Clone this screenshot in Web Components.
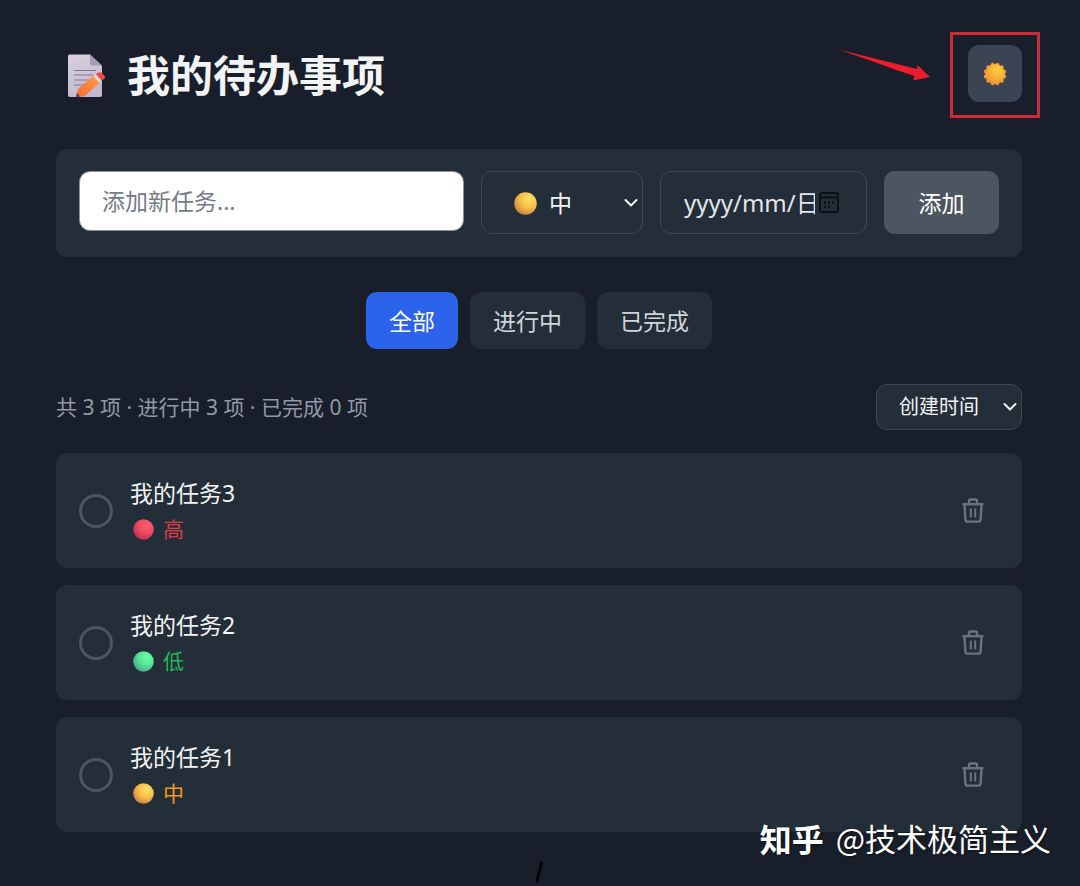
<!DOCTYPE html>
<html lang="zh-CN">
<head>
<meta charset="utf-8">
<meta name="viewport" content="width=device-width, initial-scale=1">
<title>我的待办事项</title>
<style>
  :root {
    --bg: #181f2b;
    --card: #242e39;
    --line: #3d4754;
    --text: #f3f4f6;
    --muted: #9199a6;
    --radius: 11px;
  }
  body {
    margin: 0;
    background: var(--bg);
    color: var(--text);
    font: 23px/34px "Noto Sans", "Noto Sans CJK SC", sans-serif;
  }
</style>
</head>
<body>
<todo-app></todo-app>

<script>
class PriorityDot extends HTMLElement {
  constructor() {
    super();
    this.attachShadow({ mode: 'open' });
  }

  connectedCallback() {
    const colors = {
      high: ['#ff5f73', '#ea4a5e', '#b9324f'],
      medium: ['#ffe268', '#f6bd45', '#c98149'],
      low: ['#6dffa0', '#55e295', '#48a38a']
    };
    const [light, mid, dark] = colors[this.getAttribute('level')];

    this.shadowRoot.innerHTML = `
      <style>
        :host { display: inline-block; width: 21px; height: 21px; }
        svg { display: block; width: 100%; height: 100%; }
      </style>
      <svg viewBox="0 0 20 20" aria-hidden="true">
        <defs>
          <radialGradient id="fill" cx="0.66" cy="0.3" r="0.75">
            <stop offset="0" stop-color="${light}"/>
            <stop offset="0.55" stop-color="${mid}"/>
            <stop offset="1" stop-color="${dark}"/>
          </radialGradient>
        </defs>
        <circle cx="10" cy="10" r="9.8" fill="url(#fill)"/>
      </svg>`;
  }
}

// Select with its own chevron; options are passed in the "options" attribute
class TodoSelect extends HTMLElement {
  constructor() {
    super();
    this.attachShadow({ mode: 'open' });
  }

  connectedCallback() {
    const options = this.getAttribute('options').split(',');

    this.shadowRoot.innerHTML = `
      <style>
        :host { display: block; position: relative; font-size: 23px; }
        select {
          appearance: none;
          display: block;
          box-sizing: border-box;
          width: 100%;
          height: 100%;
          margin: 0;
          padding: 0 0 0 var(--pad, 22px);
          border: 1px solid var(--line);
          border-radius: var(--radius);
          background: var(--card);
          color: var(--text);
          font: inherit;
        }
        svg {
          position: absolute;
          right: 5px;
          top: 50%;
          width: 14px;
          height: 10px;
          margin-top: -5px;
          pointer-events: none;
        }
        ::slotted(*) {
          position: absolute;
          left: 33px;
          top: 50%;
          width: 23px;
          height: 23px;
          margin-top: -11px;
          pointer-events: none;
        }
      </style>
      <select aria-label="${this.getAttribute('label')}">
        ${options.map(option => `<option>${option}</option>`).join('')}
      </select>
      <slot></slot>
      <svg viewBox="0 0 14 10" fill="none" stroke="#f3f4f6" stroke-width="2" stroke-linecap="round" stroke-linejoin="round" aria-hidden="true">
        <path d="M1.5 2 7 7.5 12.5 2"/>
      </svg>`;
  }
}

class TodoHeader extends HTMLElement {
  constructor() {
    super();
    this.attachShadow({ mode: 'open' });
    this.shadowRoot.innerHTML = `
      <style>
        :host {
          display: flex;
          justify-content: space-between;
          align-items: flex-start;
        }
        h1 {
          display: flex;
          align-items: center;
          gap: 21px;
          margin: 0;
          padding: 1px 0 0 11px;
          font-size: 43px;
          line-height: 59px;
          font-weight: 700;
        }
        .memo { width: 39px; height: 44px; }
        .theme { position: relative; }
        .theme button {
          display: grid;
          place-items: center;
          width: 54px;
          height: 57px;
          padding: 0;
          border: 0;
          border-radius: var(--radius);
          background: #3b4452;
          cursor: pointer;
        }
        .sun { width: 24px; height: 24px; }
        .frame {
          position: absolute;
          inset: -13px -18px -16px -18px;
          border: 3px solid #cd2b35;
          pointer-events: none;
        }
        .arrow {
          position: absolute;
          right: 91px;
          top: 3px;
          width: 93px;
          height: 34px;
        }
      </style>
      <h1>
        <svg class="memo" viewBox="0 0 39 44" aria-hidden="true">
          <defs>
            <linearGradient id="paper" x1="0" y1="0" x2="0.4" y2="1">
              <stop offset="0" stop-color="#d8d0df"/>
              <stop offset="1" stop-color="#c3bad2"/>
            </linearGradient>
            <linearGradient id="pencil" x1="0" y1="1" x2="1" y2="0">
              <stop offset="0" stop-color="#f06c32"/>
              <stop offset="1" stop-color="#ffa04c"/>
            </linearGradient>
          </defs>
          <path d="M2.500.5H23L35 12V41Q35 43 33 43H3Q1 43 1 41V2Q1 .5 2.500.5Z" fill="url(#paper)"/>
          <path d="M23 .5V9Q23 11.500 25.500 11.500H35Z" fill="#a69bb4"/>
          <path d="M7 16.500H29M7 21H26M7 26H22M7 31H18" stroke="#817a8c" stroke-width="1.200"/>
          <path d="M9 43 11 35 27 21 33.500 28 18 42Q13 43 9 43Z" fill="url(#pencil)"/>
          <path d="M9 43 10 39 13 42.500Z" fill="#493c50"/>
          <path d="M26.500 22.500 29 20.300 34.500 26.200 32 28.500Z" fill="#e9d8e0"/>
          <path d="M29 20.300 31 18.700Q33 17.500 35 19.200L37.800 22.300Q38.800 23.800 37.200 25L34.500 26.500Z" fill="#f24b42"/>
        </svg>
        <span>我的待办事项</span>
      </h1>
      <div class="theme">
        <button type="button" aria-label="切换主题">
          <svg class="sun" viewBox="-12 -12 24 24" aria-hidden="true">
            <defs>
              <radialGradient id="sun" cx="0.62" cy="0.32" r="0.7">
                <stop offset="0" stop-color="#fdd03d"/>
                <stop offset="0.6" stop-color="#f7ae35"/>
                <stop offset="1" stop-color="#ee9235"/>
              </radialGradient>
            </defs>
            <g id="rays" fill="#e8963a"></g>
            <circle r="10" fill="url(#sun)"/>
          </svg>
        </button>
        <div class="frame"></div>
        <svg class="arrow" viewBox="0 0 93 34" fill="#ed1c2c" aria-hidden="true">
          <path d="M.5 1.500 79 21 79.500 17 92 29 75 32.500 76.500 28 58 22 38 14.500Z"/>
        </svg>
      </div>`;

    // 12 short rays round the disc
    let rays = '';
    for (let i = 0; i < 12; i++) {
      rays += `<circle cy="-9.500" r="2" transform="rotate(${i * 30 + 15})"/>`;
    }
    this.shadowRoot.querySelector('#rays').innerHTML = rays;
  }
}

class TodoForm extends HTMLElement {
  constructor() {
    super();
    this.attachShadow({ mode: 'open' });
    this.shadowRoot.innerHTML = `
      <style>
        :host { display: block; }
        form {
          display: flex;
          align-items: flex-start;
          gap: 17px;
          margin: 0;
          padding: 22px 23px 23px;
          border-radius: var(--radius);
          background: var(--card);
        }
        input, button { font: inherit; box-sizing: border-box; }
        .task {
          flex: 1;
          min-width: 0;
          height: 60px;
          padding: 0 22px;
          border: 1px solid #8a919c;
          border-radius: var(--radius);
          background: #fff;
          color: #111827;
        }
        .task::placeholder { color: #757b84; opacity: 1; }
        todo-select { flex: none; width: 162px; height: 63px; --pad: 67px; }
        .date {
          flex: none;
          display: flex;
          align-items: center;
          gap: 4px;
          box-sizing: border-box;
          width: 207px;
          height: 63px;
          padding: 0 27px 0 23px;
          border: 1px solid var(--line);
          border-radius: var(--radius);
        }
        .date input {
          flex: 1;
          min-width: 0;
          padding: 0;
          border: 0;
          background: none;
          color: var(--text);
          font-size: 24px;
        }
        .date input::placeholder { color: #e2e5ea; opacity: 1; }
        .date button {
          display: block;
          width: 20px;
          height: 22px;
          padding: 0;
          border: 0;
          background: none;
        }
        .date svg { display: block; width: 20px; height: 22px; }
        .add {
          flex: none;
          width: 115px;
          height: 63px;
          padding: 0;
          border: 0;
          border-radius: var(--radius);
          background: #4c5661;
          color: #fff;
        }
      </style>
      <form>
        <input class="task" type="text" placeholder="添加新任务..." aria-label="添加新任务">
        <todo-select label="优先级" options="中,高,低">
          <priority-dot level="medium"></priority-dot>
        </todo-select>
        <div class="date">
          <input type="text" placeholder="yyyy/mm/日" aria-label="截止日期">
          <button type="button" aria-label="选择日期">
            <svg viewBox="0 0 20 22" fill="none" stroke="#0c1118" stroke-width="2" aria-hidden="true">
              <rect x="1" y="1" width="18" height="19" rx="2"/>
              <path d="M1 5.500H19"/>
              <path d="M5 10.500H7M9 10.500H11M13 10.500H15M5 15H7M9 15H11" stroke-width="2.400"/>
            </svg>
          </button>
        </div>
        <button class="add" type="submit">添加</button>
      </form>`;

    this.shadowRoot.querySelector('form').addEventListener('submit', (event) => {
      event.preventDefault();
      const input = this.shadowRoot.querySelector('.task');
      if (!input.value.trim()) return;
      this.dispatchEvent(new CustomEvent('add-task', { detail: input.value.trim() }));
      input.value = '';
    });
  }
}

class TodoFilters extends HTMLElement {
  constructor() {
    super();
    this.attachShadow({ mode: 'open' });
    this.shadowRoot.innerHTML = `
      <style>
        :host { display: flex; justify-content: center; gap: 12px; }
        button {
          height: 57px;
          padding: 0 23px;
          border: 0;
          border-radius: var(--radius);
          background: var(--card);
          color: #d1d5db;
          font: inherit;
          cursor: pointer;
        }
        button.active { background: #2b64eb; color: #fff; }
      </style>
      <button type="button" class="active">全部</button>
      <button type="button">进行中</button>
      <button type="button">已完成</button>`;

    const buttons = this.shadowRoot.querySelectorAll('button');
    buttons.forEach(button => {
      button.addEventListener('click', () => {
        buttons.forEach(other => other.classList.toggle('active', other === button));
      });
    });
  }
}

class TodoItem extends HTMLElement {
  constructor() {
    super();
    this.attachShadow({ mode: 'open' });
  }

  connectedCallback() {
    const level = this.getAttribute('level');
    const labels = { high: '高', medium: '中', low: '低' };
    const colors = { high: '#d83f46', medium: '#f39a1b', low: '#22b85a' };

    this.shadowRoot.innerHTML = `
      <style>
        :host {
          display: flex;
          align-items: center;
          gap: 17px;
          padding: 21px 23px;
          border-radius: var(--radius);
          background: var(--card);
        }
        input {
          appearance: none;
          flex: none;
          width: 34px;
          height: 34px;
          margin: 0;
          border: 3px solid #4b5563;
          border-radius: 50%;
        }
        input:checked { background: #2b64eb; }
        .content { flex: 1; min-width: 0; }
        label { display: block; line-height: 38px; }
        .badge {
          display: flex;
          align-items: center;
          gap: 9px;
          padding-left: 3px;
          color: ${colors[level]};
          font-size: 21px;
          line-height: 35px;
        }
        button {
          flex: none;
          display: grid;
          place-items: center;
          width: 52px;
          height: 52px;
          padding: 0;
          border: 0;
          background: none;
          color: #6b7280;
          cursor: pointer;
        }
        svg { width: 22px; height: 25px; }
      </style>
      <input type="checkbox" id="done">
      <div class="content">
        <label for="done"><slot></slot></label>
        <div class="badge"><priority-dot level="${level}"></priority-dot>${labels[level]}</div>
      </div>
      <button type="button" aria-label="删除">
        <svg viewBox="0 0 22 25" fill="none" stroke="currentColor" stroke-width="2.400" stroke-linejoin="round" aria-hidden="true">
          <path d="M.5 6.200H21.500"/>
          <path d="M7 6V3Q7 1.500 8.500 1.500H13.500Q15 1.500 15 3V6"/>
          <path d="M2.500 6.500 3.400 21.600Q3.600 23.600 5.600 23.600H16.400Q18.400 23.600 18.600 21.600L19.500 6.500"/>
          <path d="M8.800 10.500V19.500M13.200 10.500V19.500" stroke-width="2"/>
        </svg>
      </button>`;

    this.shadowRoot.querySelector('button').addEventListener('click', () => this.remove());
  }
}

class TodoApp extends HTMLElement {
  constructor() {
    super();
    this.attachShadow({ mode: 'open' });
  }

  connectedCallback() {
    this.shadowRoot.innerHTML = `
      <style>
        :host { display: block; position: relative; min-height: 100vh; }
        main { display: flex; flex-direction: column; padding: 45px 58px 0 56px; }
        todo-header { margin-bottom: 44px; }
        todo-form { margin-bottom: 35px; }
        todo-filters { margin-bottom: 35px; }
        .toolbar {
          display: flex;
          justify-content: space-between;
          align-items: center;
          margin-bottom: 23px;
          color: var(--muted);
          font-size: 21px;
        }
        .toolbar todo-select { width: 146px; height: 46px; font-size: 20px; }
        .list { display: flex; flex-direction: column; gap: 17px; }
        .mark { align-self: center; width: 8px; height: 22px; margin-top: 29px; }
        .signature {
          position: absolute;
          right: 29px;
          bottom: 25px;
          display: flex;
          gap: 12px;
          color: #fff;
          font: 31px/46px "Noto Sans CJK SC", sans-serif;
          text-shadow: 1px 1px 2px #0008;
        }
        .signature b { font-size: 32px; }
      </style>
      <main>
        <todo-header></todo-header>
        <todo-form></todo-form>
        <todo-filters></todo-filters>
        <div class="toolbar">
          <span>共 3 项 · 进行中 3 项 · 已完成 0 项</span>
          <todo-select label="排序" options="创建时间,优先级"></todo-select>
        </div>
        <div class="list">
          <todo-item level="high">我的任务3</todo-item>
          <todo-item level="low">我的任务2</todo-item>
          <todo-item level="medium">我的任务1</todo-item>
        </div>
        <svg class="mark" viewBox="0 0 8 22" aria-hidden="true">
          <path d="M6.500 2 2 20" fill="none" stroke="#030406" stroke-width="3" stroke-linecap="round"/>
        </svg>
      </main>
      <div class="signature"><b>知乎</b><span>@技术极简主义</span></div>`;

    this.shadowRoot.querySelector('todo-form').addEventListener('add-task', (event) => {
      const item = document.createElement('todo-item');
      item.setAttribute('level', 'medium');
      item.textContent = event.detail;
      this.shadowRoot.querySelector('.list').prepend(item);
    });
  }
}

customElements.define('priority-dot', PriorityDot);
customElements.define('todo-select', TodoSelect);
customElements.define('todo-header', TodoHeader);
customElements.define('todo-form', TodoForm);
customElements.define('todo-filters', TodoFilters);
customElements.define('todo-item', TodoItem);
customElements.define('todo-app', TodoApp);
</script>
</body>
</html>
